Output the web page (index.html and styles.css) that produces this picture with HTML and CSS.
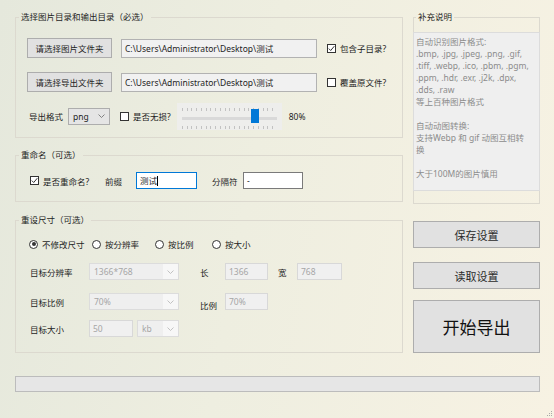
FILE: index.html
```html
<!DOCTYPE html>
<html lang="zh-CN">
<head>
    <meta charset="UTF-8">
    <title>图片格式转换</title>
    <link rel="stylesheet" href="styles.css">
</head>
<body>
    <div class="window">
        <div class="layout">
            <div class="left">
                <fieldset class="group">
                    <legend>选择图片目录和输出目录（必选）</legend>
                    <div class="inner dirs">
                        <div class="row dir-row">
                            <button class="btn btn-dir">请选择图片文件夹</button>
                            <div class="textbox path">C:\Users\Administrator\Desktop\测试</div>
                            <span class="check"><span class="box"><svg width="7" height="7" viewBox="0 0 7 7"><path d="M0.8 3.6 L2.7 5.5 L6.3 1.2" fill="none" stroke="#333" stroke-width="1"/></svg></span>包含子目录?</span>
                        </div>
                        <div class="row dir-row second">
                            <button class="btn btn-dir">请选择导出文件夹</button>
                            <div class="textbox path">C:\Users\Administrator\Desktop\测试</div>
                            <span class="check"><span class="box"></span>覆盖原文件?</span>
                        </div>
                        <div class="row fmt-row">
                            <span class="lbl fmt-lbl">导出格式</span>
                            <div class="select fmt-select">png<svg class="arrow" width="7" height="4" viewBox="0 0 7 4"><path d="M0.5 0.5 L3.5 3.5 L6.5 0.5" fill="none" stroke="#777" stroke-width="0.9"/></svg></div>
                            <span class="check lossless"><span class="box"></span>是否无损?</span>
                            <div class="slider">
                                <div class="ticks"></div>
                                <div class="track"></div>
                                <div class="ticks"></div>
                                <span class="thumb" style="left: 74px"></span>
                            </div>
                            <span class="pct">80%</span>
                        </div>
                    </div>
                </fieldset>

                <fieldset class="group rename">
                    <legend>重命名（可选）</legend>
                    <div class="inner rename-inner">
                        <div class="row">
                            <span class="check rename-check"><span class="box"><svg width="7" height="7" viewBox="0 0 7 7"><path d="M0.8 3.6 L2.7 5.5 L6.3 1.2" fill="none" stroke="#333" stroke-width="1"/></svg></span>是否重命名?</span>
                            <span class="lbl prefix-lbl">前缀</span>
                            <div class="textbox edit focused">测试<span class="caret"></span></div>
                            <span class="lbl sep-lbl">分隔符</span>
                            <div class="textbox edit sep">-</div>
                        </div>
                    </div>
                </fieldset>

                <fieldset class="group resize">
                    <legend>重设尺寸（可选）</legend>
                    <div class="inner resize-inner">
                        <div class="row radios">
                            <span class="radio r1"><span class="dot on"></span>不修改尺寸</span>
                            <span class="radio r2"><span class="dot"></span>按分辨率</span>
                            <span class="radio r3"><span class="dot"></span>按比例</span>
                            <span class="radio"><span class="dot"></span>按大小</span>
                        </div>
                        <div class="row form-row res-row">
                            <span class="lbl form-lbl">目标分辨率</span>
                            <div class="select off wide">1366*768<svg class="arrow" width="7" height="4" viewBox="0 0 7 4"><path d="M0.5 0.5 L3.5 3.5 L6.5 0.5" fill="none" stroke="#bbb" stroke-width="0.9"/></svg></div>
                            <span class="lbl side-lbl">长</span>
                            <div class="textbox off num">1366</div>
                            <span class="lbl w-lbl">宽</span>
                            <div class="textbox off num w">768</div>
                        </div>
                        <div class="row form-row ratio-row">
                            <span class="lbl form-lbl">目标比例</span>
                            <div class="select off wide">70%<svg class="arrow" width="7" height="4" viewBox="0 0 7 4"><path d="M0.5 0.5 L3.5 3.5 L6.5 0.5" fill="none" stroke="#bbb" stroke-width="0.9"/></svg></div>
                            <span class="lbl side-lbl low">比例</span>
                            <div class="textbox off num">70%</div>
                        </div>
                        <div class="row form-row size-row">
                            <span class="lbl form-lbl">目标大小</span>
                            <div class="textbox off size">50</div>
                            <div class="select off unit">kb<svg class="arrow" width="7" height="4" viewBox="0 0 7 4"><path d="M0.5 0.5 L3.5 3.5 L6.5 0.5" fill="none" stroke="#bbb" stroke-width="0.9"/></svg></div>
                        </div>
                    </div>
                </fieldset>
            </div>

            <div class="right">
                <fieldset class="group notes">
                    <legend>补充说明</legend>
                    <div class="memo">自动识别图片格式:
.bmp, .jpg, .jpeg, .png, .gif,
.tiff, .webp, .ico, .pbm, .pgm,
.ppm, .hdr, .exr, .j2k, .dpx,
.dds, .raw
等上百种图片格式

自动动图转换:
支持Webp 和 gif 动图互相转
换

大于100M的图片慎用</div>
                </fieldset>
                <button class="btn side-btn save">保存设置</button>
                <button class="btn side-btn load">读取设置</button>
                <button class="btn side-btn start">开始导出</button>
            </div>
        </div>

        <div class="progress"></div>
    </div>

    <svg class="grip" width="6" height="6" viewBox="0 0 6 6">
        <rect x="4" y="0" width="1" height="1" fill="#aaa"/>
        <rect x="2" y="2" width="1" height="1" fill="#aaa"/>
        <rect x="4" y="2" width="1" height="1" fill="#aaa"/>
        <rect x="0" y="4" width="1" height="1" fill="#aaa"/>
        <rect x="2" y="4" width="1" height="1" fill="#aaa"/>
        <rect x="4" y="4" width="1" height="1" fill="#aaa"/>
    </svg>
</body>
</html>
```

FILE: styles.css
```css
html, body {
    margin: 0;
    width: 554px;
    height: 418px;
    overflow: hidden;
}
body {
    font-family: "Noto Sans", "Noto Sans CJK SC", sans-serif;
    font-size: 8.5px;
    color: #1e1e1e;
    background: linear-gradient(100deg, #e5e8dc 0%, #eeeee0 45%, #f7f2e3 100%);
    position: relative;
}
.window {
    padding: 9px 0 0 15px;
}
.layout {
    display: grid;
    grid-template-columns: 388px 127px;
    column-gap: 10px;
}
.left, .right {
    display: flex;
    flex-direction: column;
}

/* group boxes */
.group {
    margin: 0;
    padding: 0;
    min-width: 0;
    border: 1px solid #dcd9cf;
}
.group legend {
    margin-left: 3px;
    padding: 0 2px;
    line-height: 16px;
    font-size: 8.5px;
}
.inner {
    padding-left: 11px;
}
.row {
    display: flex;
    align-items: center;
}

/* group 1 */
.dirs {
    padding-top: 13px;
    padding-bottom: 7px;
}
.dir-row {
    height: 20px;
}
.dir-row.second {
    margin-top: 14px;
}
.btn {
    font-family: inherit;
    color: #1e1e1e;
    background: #e1e1e1;
    border: 1px solid #adadad;
    padding: 0;
    margin: 0;
}
.btn-dir {
    width: 85px;
    height: 20px;
    font-size: 8.5px;
}
.textbox {
    box-sizing: border-box;
    height: 17px;
    line-height: 15px;
    padding: 0 3px;
    white-space: nowrap;
    overflow: hidden;
}
.path {
    width: 196px;
    height: 19px;
    line-height: 17px;
    margin-left: 9px;
    background: #f1f1f1;
    border: 1px solid #b2b2b2;
}
.check {
    display: flex;
    align-items: center;
}
.dir-row .check {
    margin-left: 10px;
}
.box {
    box-sizing: border-box;
    width: 9px;
    height: 9px;
    border: 1px solid #333;
    background: #fff;
    margin-right: 4px;
    display: flex;
    align-items: center;
    justify-content: center;
}
.fmt-row {
    margin-top: 10px;
    height: 28px;
}
.fmt-lbl {
    width: 39px;
    padding-left: 2px;
}
.select {
    box-sizing: border-box;
    height: 17px;
    padding: 0 4px;
    display: flex;
    align-items: center;
    justify-content: space-between;
}
.fmt-select {
    width: 42px;
    background: #e5e5e5;
    border: 1px solid #adadad;
}
.lossless {
    margin-left: 10px;
}
.slider {
    position: relative;
    box-sizing: border-box;
    width: 105px;
    height: 27px;
    margin-left: 6px;
    padding: 5px 5px 0;
    background: #eeeeec;
}
.ticks {
    height: 3px;
    background: repeating-linear-gradient(to right, #c2c2c2 0 1px, transparent 1px 4.75px);
}
.track {
    height: 3px;
    margin: 6px 0 6px;
    background: #d9d9d9;
}
.thumb {
    position: absolute;
    top: 6px;
    width: 8px;
    height: 14px;
    background: #0078d7;
}
.pct {
    margin-left: 7px;
}

/* group 2 */
.rename {
    margin-top: 9px;
}
.rename-inner {
    padding-top: 9px;
    padding-bottom: 12px;
    padding-left: 14px;
}
.rename-check {
    width: 75px;
}
.prefix-lbl {
    width: 31px;
}
.edit {
    background: #fff;
    border: 1px solid #7a7a7a;
}
.focused {
    width: 61px;
    border-color: #0078d7;
    display: flex;
    align-items: center;
}
.caret {
    width: 1px;
    height: 10px;
    background: #000;
}
.sep-lbl {
    width: 31px;
    margin-left: 15px;
}
.sep {
    width: 60px;
}

/* group 3 */
.resize {
    margin-top: 10px;
}
.resize-inner {
    padding-top: 8px;
    padding-bottom: 15px;
    padding-left: 13px;
}
.radios {
    height: 16px;
}
.radio {
    display: flex;
    align-items: center;
}
.r1, .r2 {
    width: 63px;
}
.r3 {
    width: 57px;
}
.dot {
    box-sizing: border-box;
    width: 9px;
    height: 9px;
    border: 1px solid #333;
    border-radius: 50%;
    background: #fff;
    margin-right: 4px;
    display: flex;
    align-items: center;
    justify-content: center;
}
.dot.on::after {
    content: "";
    width: 4px;
    height: 4px;
    border-radius: 50%;
    background: #333;
}
.form-row {
    height: 17px;
    padding-left: 1px;
}
.res-row {
    margin-top: 11px;
}
.ratio-row {
    margin-top: 13px;
}
.size-row {
    margin-top: 10px;
}
.form-lbl {
    width: 59px;
}
.off {
    background: #f0f0f0;
    border: 1px solid #d8d8d8;
    color: #a6a6a6;
}
.select.off {
    background: linear-gradient(to right, #efefef 0, #efefef calc(100% - 15px), #f7f7f7 calc(100% - 15px));
    border-color: #dcdcdc;
}
.wide {
    width: 90px;
}
.side-lbl {
    width: 25px;
    margin-left: 21px;
}
.side-lbl.low {
    padding-top: 6px;
}
.num {
    width: 43px;
}
.w-lbl {
    width: 19px;
    margin-left: 10px;
}
.num.w {
    width: 45px;
}
.size {
    width: 44px;
}
.unit {
    width: 42px;
    margin-left: 4px;
}

/* right column */
.notes legend {
    margin-left: 2px;
}
.memo {
    box-sizing: border-box;
    margin: 7px -1px 12px;
    height: 159px;
    padding: 3px 2px;
    background: #efefef;
    border: 1px solid #dcdcdc;
    color: #8c8c8c;
    font-size: 8.5px;
    line-height: 12px;
    white-space: pre-line;
}
.side-btn {
    box-sizing: border-box;
    width: 127px;
    height: 27px;
    font-size: 11px;
    color: #2a2a2a;
}
.save {
    margin-top: 17px;
}
.load {
    margin-top: 14px;
}
.start {
    margin-top: 11px;
    height: 53px;
    font-size: 17px;
    color: #111;
}

.progress {
    box-sizing: border-box;
    width: 525px;
    height: 16px;
    margin-top: 23px;
    background: #e6e6e6;
    border: 1px solid #bcbcbc;
}
.grip {
    position: absolute;
    right: 1px;
    bottom: 1px;
}
```
